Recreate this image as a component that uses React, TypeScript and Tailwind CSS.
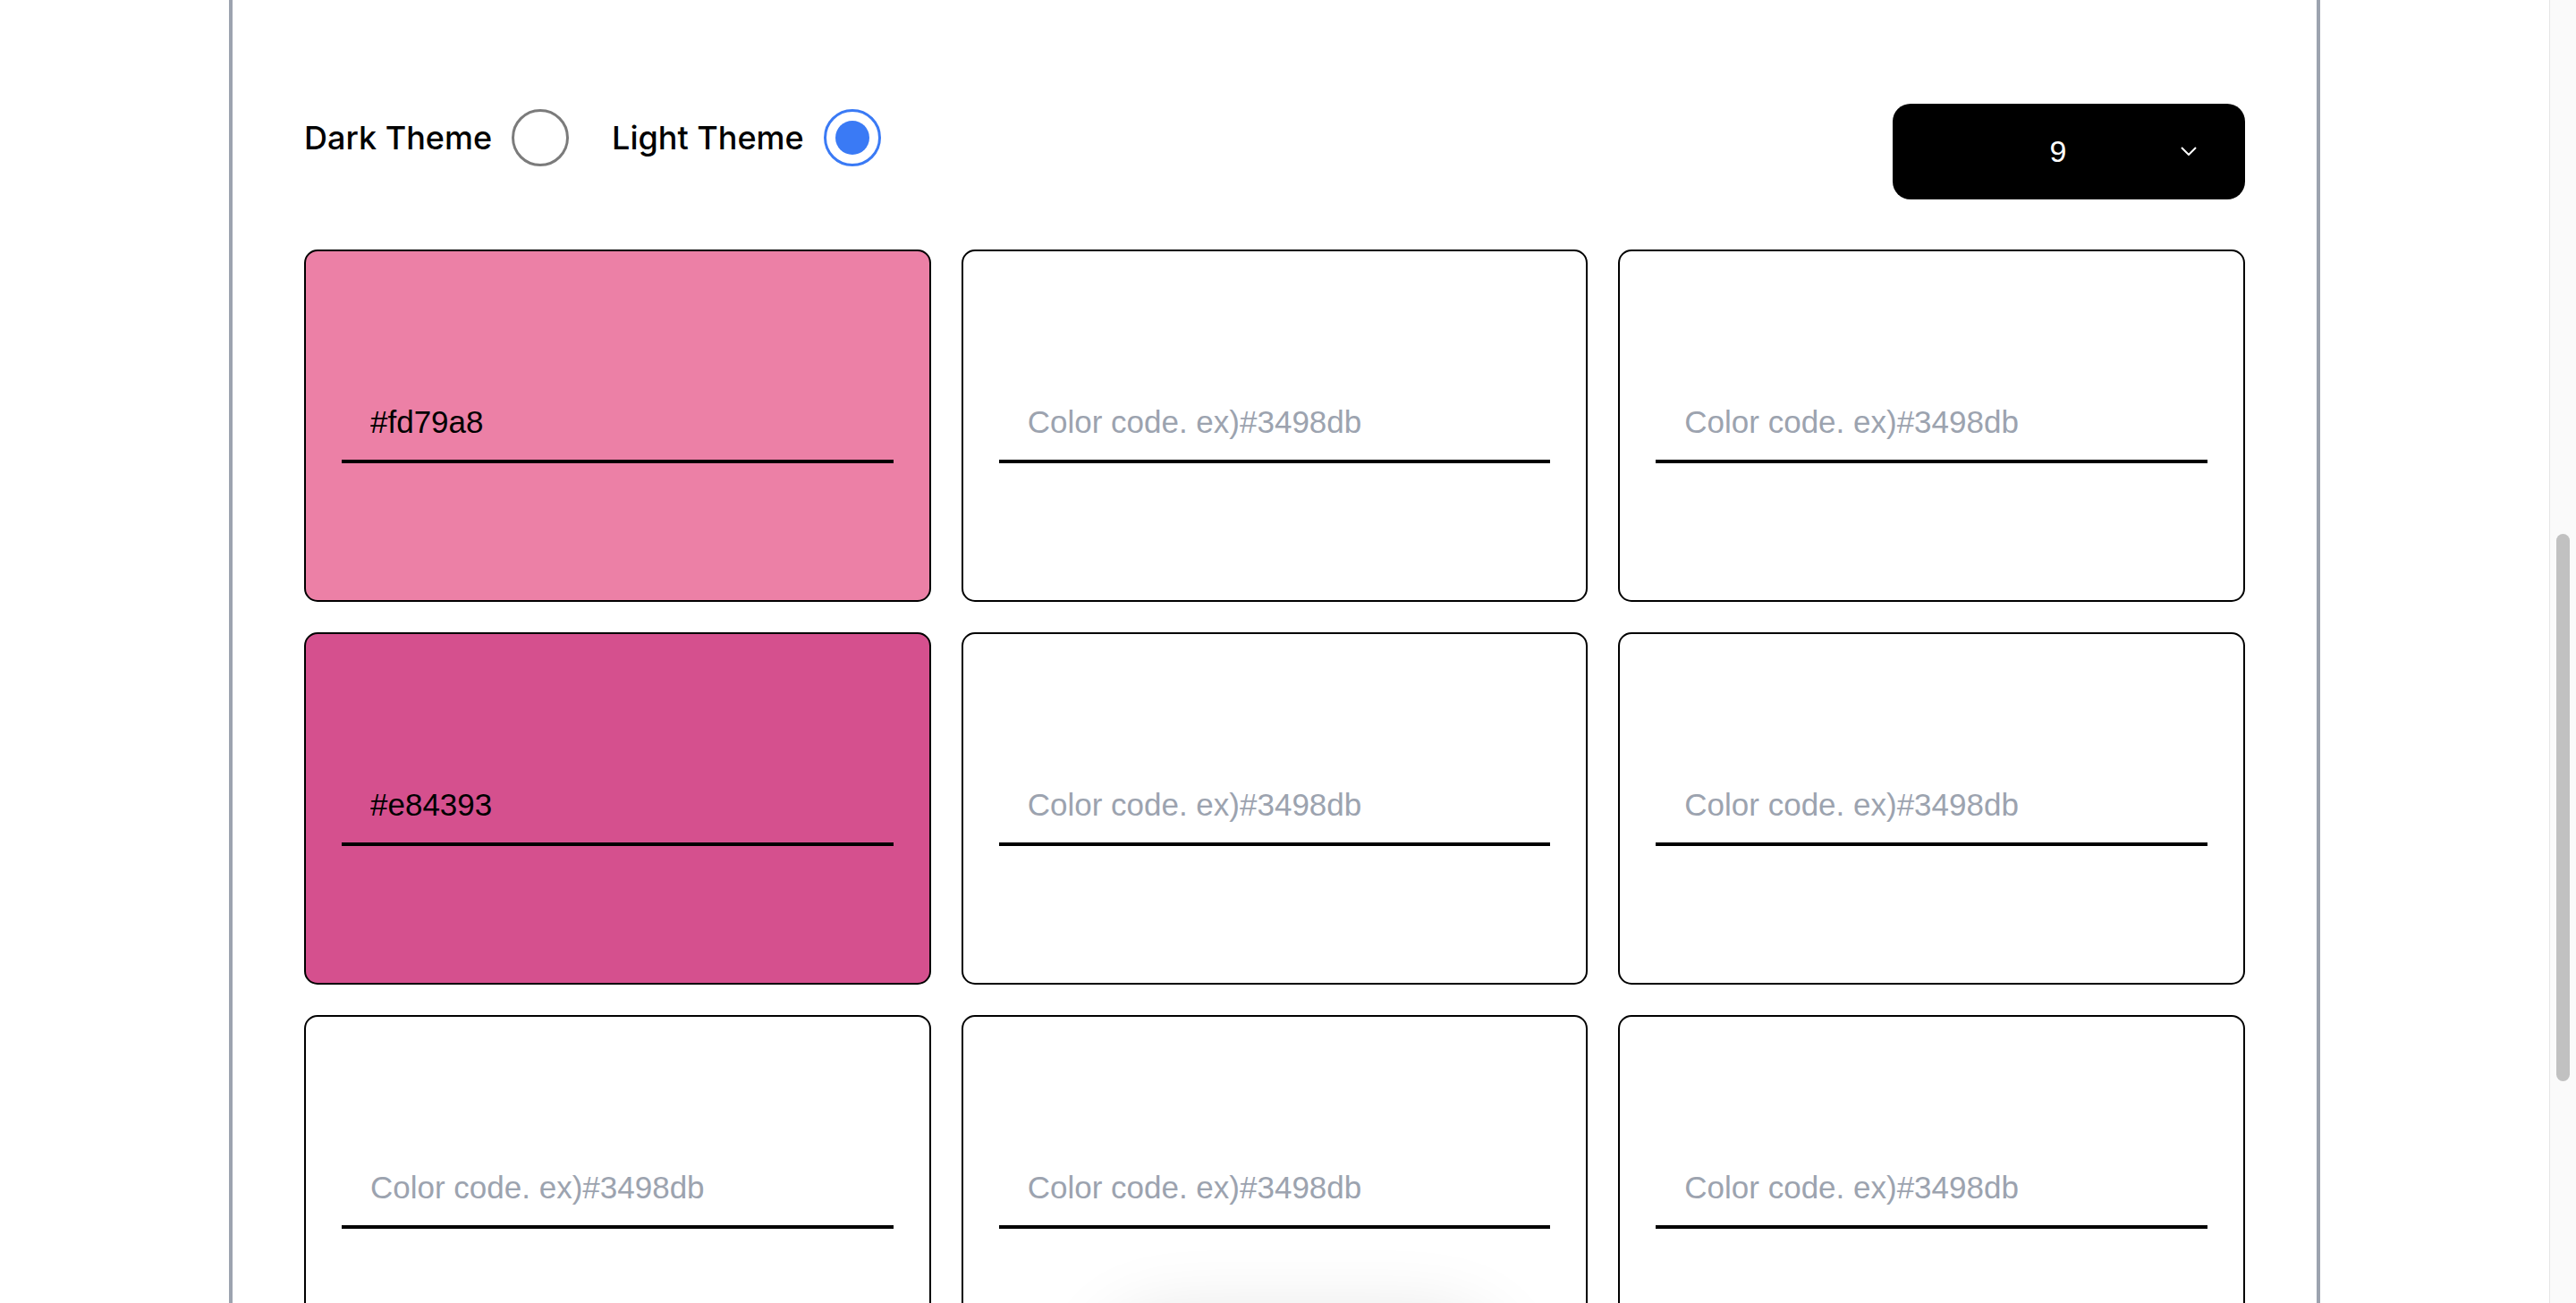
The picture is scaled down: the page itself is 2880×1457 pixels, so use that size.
import React from "react";

const inputFont = { fontFamily: '"Liberation Sans", Arial, sans-serif' };

type Card = { value?: string; bg?: string };

const cards: Card[] = [
  { value: "#fd79a8", bg: "bg-[#ec80a6]" },
  {},
  {},
  { value: "#e84393", bg: "bg-[#d5508e]" },
  {},
  {},
  {},
  {},
  {},
];

function ColorCard({ card }: { card: Card }) {
  return (
    <div
      className={`h-[394px] rounded-[15px] border-2 border-black flex items-center px-10 ${
        card.bg ?? "bg-white"
      }`}
    >
      <input
        defaultValue={card.value ?? ""}
        placeholder="Color code. ex)#3498db"
        className="w-full h-[84px] border-b-4 border-black bg-transparent pl-8 pb-1 text-[35px] text-black placeholder:text-[#9ca3af] outline-none"
        style={inputFont}
      />
    </div>
  );
}

export default function App() {
  return (
    <div className="h-[1457px] w-full overflow-hidden flex bg-white relative">
      <div className="flex-1 h-full overflow-hidden">
        <div className="w-[2338px] mx-auto h-full border-x-4 border-[#9ca3af] px-20 pt-[116px]">
          <div className="flex justify-between items-start">
            <div
              className="flex items-center mt-[6px] h-[64px] gap-12 text-[36px] font-medium text-black"
              style={{ fontFamily: 'Inter, "Noto Sans", sans-serif' }}
            >
              <label className="flex items-center gap-[22px]">
                <span>Dark Theme</span>
                <span className="w-[64px] h-[64px] rounded-full border-[3px] border-[#7b7b7b] bg-white" />
              </label>
              <label className="flex items-center gap-[22px]">
                <span>Light Theme</span>
                <span className="w-[64px] h-[64px] rounded-full border-[3px] border-[#3a7af5] bg-white flex items-center justify-center">
                  <span className="w-[38px] h-[38px] rounded-full bg-[#3a7af5]" />
                </span>
              </label>
            </div>
            <div className="relative w-[394px] h-[107px] rounded-[20px] bg-black flex items-center text-white">
              <span className="w-[370px] text-center text-[34px]" style={inputFont}>
                9
              </span>
              <svg
                className="absolute right-[54px] top-[48px]"
                width="18"
                height="10"
                viewBox="0 0 18 10"
                fill="none"
              >
                <path d="M1 1L9 9L17 1" stroke="white" strokeWidth="2" />
              </svg>
            </div>
          </div>
          <div className="grid grid-cols-3 gap-[34px] mt-[56px]">
            {cards.map((c, i) => (
              <ColorCard key={i} card={c} />
            ))}
          </div>
        </div>
      </div>
      <div className="w-[30px] h-full border-l border-[#e6e6e6] bg-[#fafafa] flex justify-center">
        <div className="mt-[597px] w-[15px] h-[612px] rounded-full bg-[#c1c1c1]" />
      </div>
      <div className="absolute left-[1240px] top-[1480px] w-[430px] h-[120px] rounded-full bg-white shadow-[0_0_90px_rgba(0,0,0,0.14)]" />
    </div>
  );
}
